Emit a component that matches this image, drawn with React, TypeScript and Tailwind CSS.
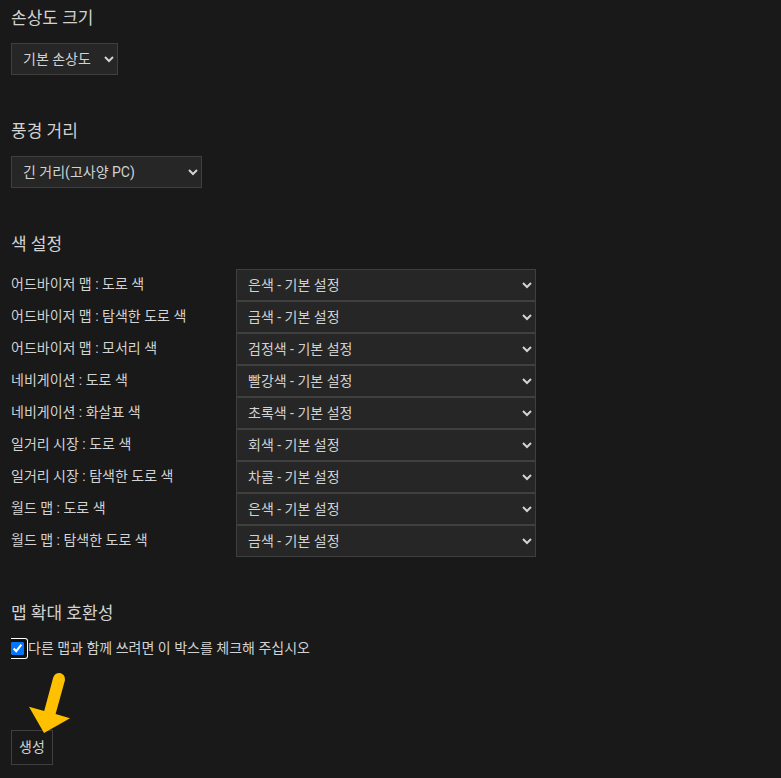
import { useState } from "react"

interface ColorSetting {
  id: string
  label: string
  color: string
}

const colorSettings: ColorSetting[] = [
  { id: "advisor-road", label: "어드바이저 맵 : 도로 색", color: "은색" },
  { id: "advisor-explored", label: "어드바이저 맵 : 탐색한 도로 색", color: "금색" },
  { id: "advisor-edge", label: "어드바이저 맵 : 모서리 색", color: "검정색" },
  { id: "nav-road", label: "네비게이션 : 도로 색", color: "빨강색" },
  { id: "nav-arrow", label: "네비게이션 : 화살표 색", color: "초록색" },
  { id: "market-road", label: "일거리 시장 : 도로 색", color: "회색" },
  { id: "market-explored", label: "일거리 시장 : 탐색한 도로 색", color: "차콜" },
  { id: "world-road", label: "월드 맵 : 도로 색", color: "은색" },
  { id: "world-explored", label: "월드 맵 : 탐색한 도로 색", color: "금색" },
]

const selectClass = "block h-8 border border-[#3f3f3f] bg-[#262626] pl-[7px] text-sm text-[#d2d2d2]"
const headingClass = "mb-[13px] text-[17px] leading-6"

export default function App() {
  const [compatible, setCompatible] = useState(true)

  return (
    <div className="min-h-screen bg-[#191919] pl-[11px] pt-[6px] font-[Roboto,'Noto_Sans_CJK_KR',sans-serif] text-sm text-[#d2d2d2]">
      <form className="flex flex-col items-start gap-11" onSubmit={(e) => e.preventDefault()}>
        <section>
          <h2 className={headingClass}>
            <label htmlFor="damage">손상도 크기</label>
          </h2>
          <select id="damage" className={`${selectClass} w-[107px]`}>
            <option>기본 손상도</option>
          </select>
        </section>

        <section>
          <h2 className={headingClass}>
            <label htmlFor="distance">풍경 거리</label>
          </h2>
          <select id="distance" className={`${selectClass} w-[191px]`}>
            <option>긴 거리(고사양 PC)</option>
          </select>
        </section>

        <section className="w-full max-w-[525px]">
          <h2 className={headingClass}>색 설정</h2>
          {colorSettings.map(({ id, label, color }) => (
            <div key={id} className="flex">
              <label htmlFor={id} className="w-[225px] shrink-0 leading-[30px]">
                {label}
              </label>
              <select id={id} className={`${selectClass} min-w-0 flex-1`}>
                <option>{color} - 기본 설정</option>
              </select>
            </div>
          ))}
        </section>

        <section>
          <h2 className={headingClass}>맵 확대 호환성</h2>
          <div className="flex items-start">
            <span className="rounded-r-[3px] border-y border-r border-white bg-[#101010] py-[3px] pr-[3px]">
              <input
                id="compatible"
                type="checkbox"
                checked={compatible}
                onChange={(e) => setCompatible(e.target.checked)}
                className="block size-[13px]"
              />
            </span>
            <label htmlFor="compatible" className="leading-5">
              다른 맵과 함께 쓰려면 이 박스를 체크해 주십시오
            </label>
          </div>
        </section>

        <div className="relative mt-[27px] mb-3">
          <button type="submit" className="block border border-[#3f3f3f] px-[7px] py-1 leading-[25px]">
            생성
          </button>
          <svg
            className="pointer-events-none absolute bottom-[31px] left-[17px]"
            width="44"
            height="62"
            viewBox="28 672 44 62"
            aria-hidden="true"
          >
            <path
              d="M53.2 677.4 Q55 672.8 60 673 Q65.4 674.4 65 680 L55.6 714 L70 718.2 L44 733 L29 706.8 L44.2 711 Z"
              fill="#ffc000"
            />
          </svg>
        </div>
      </form>
    </div>
  )
}
